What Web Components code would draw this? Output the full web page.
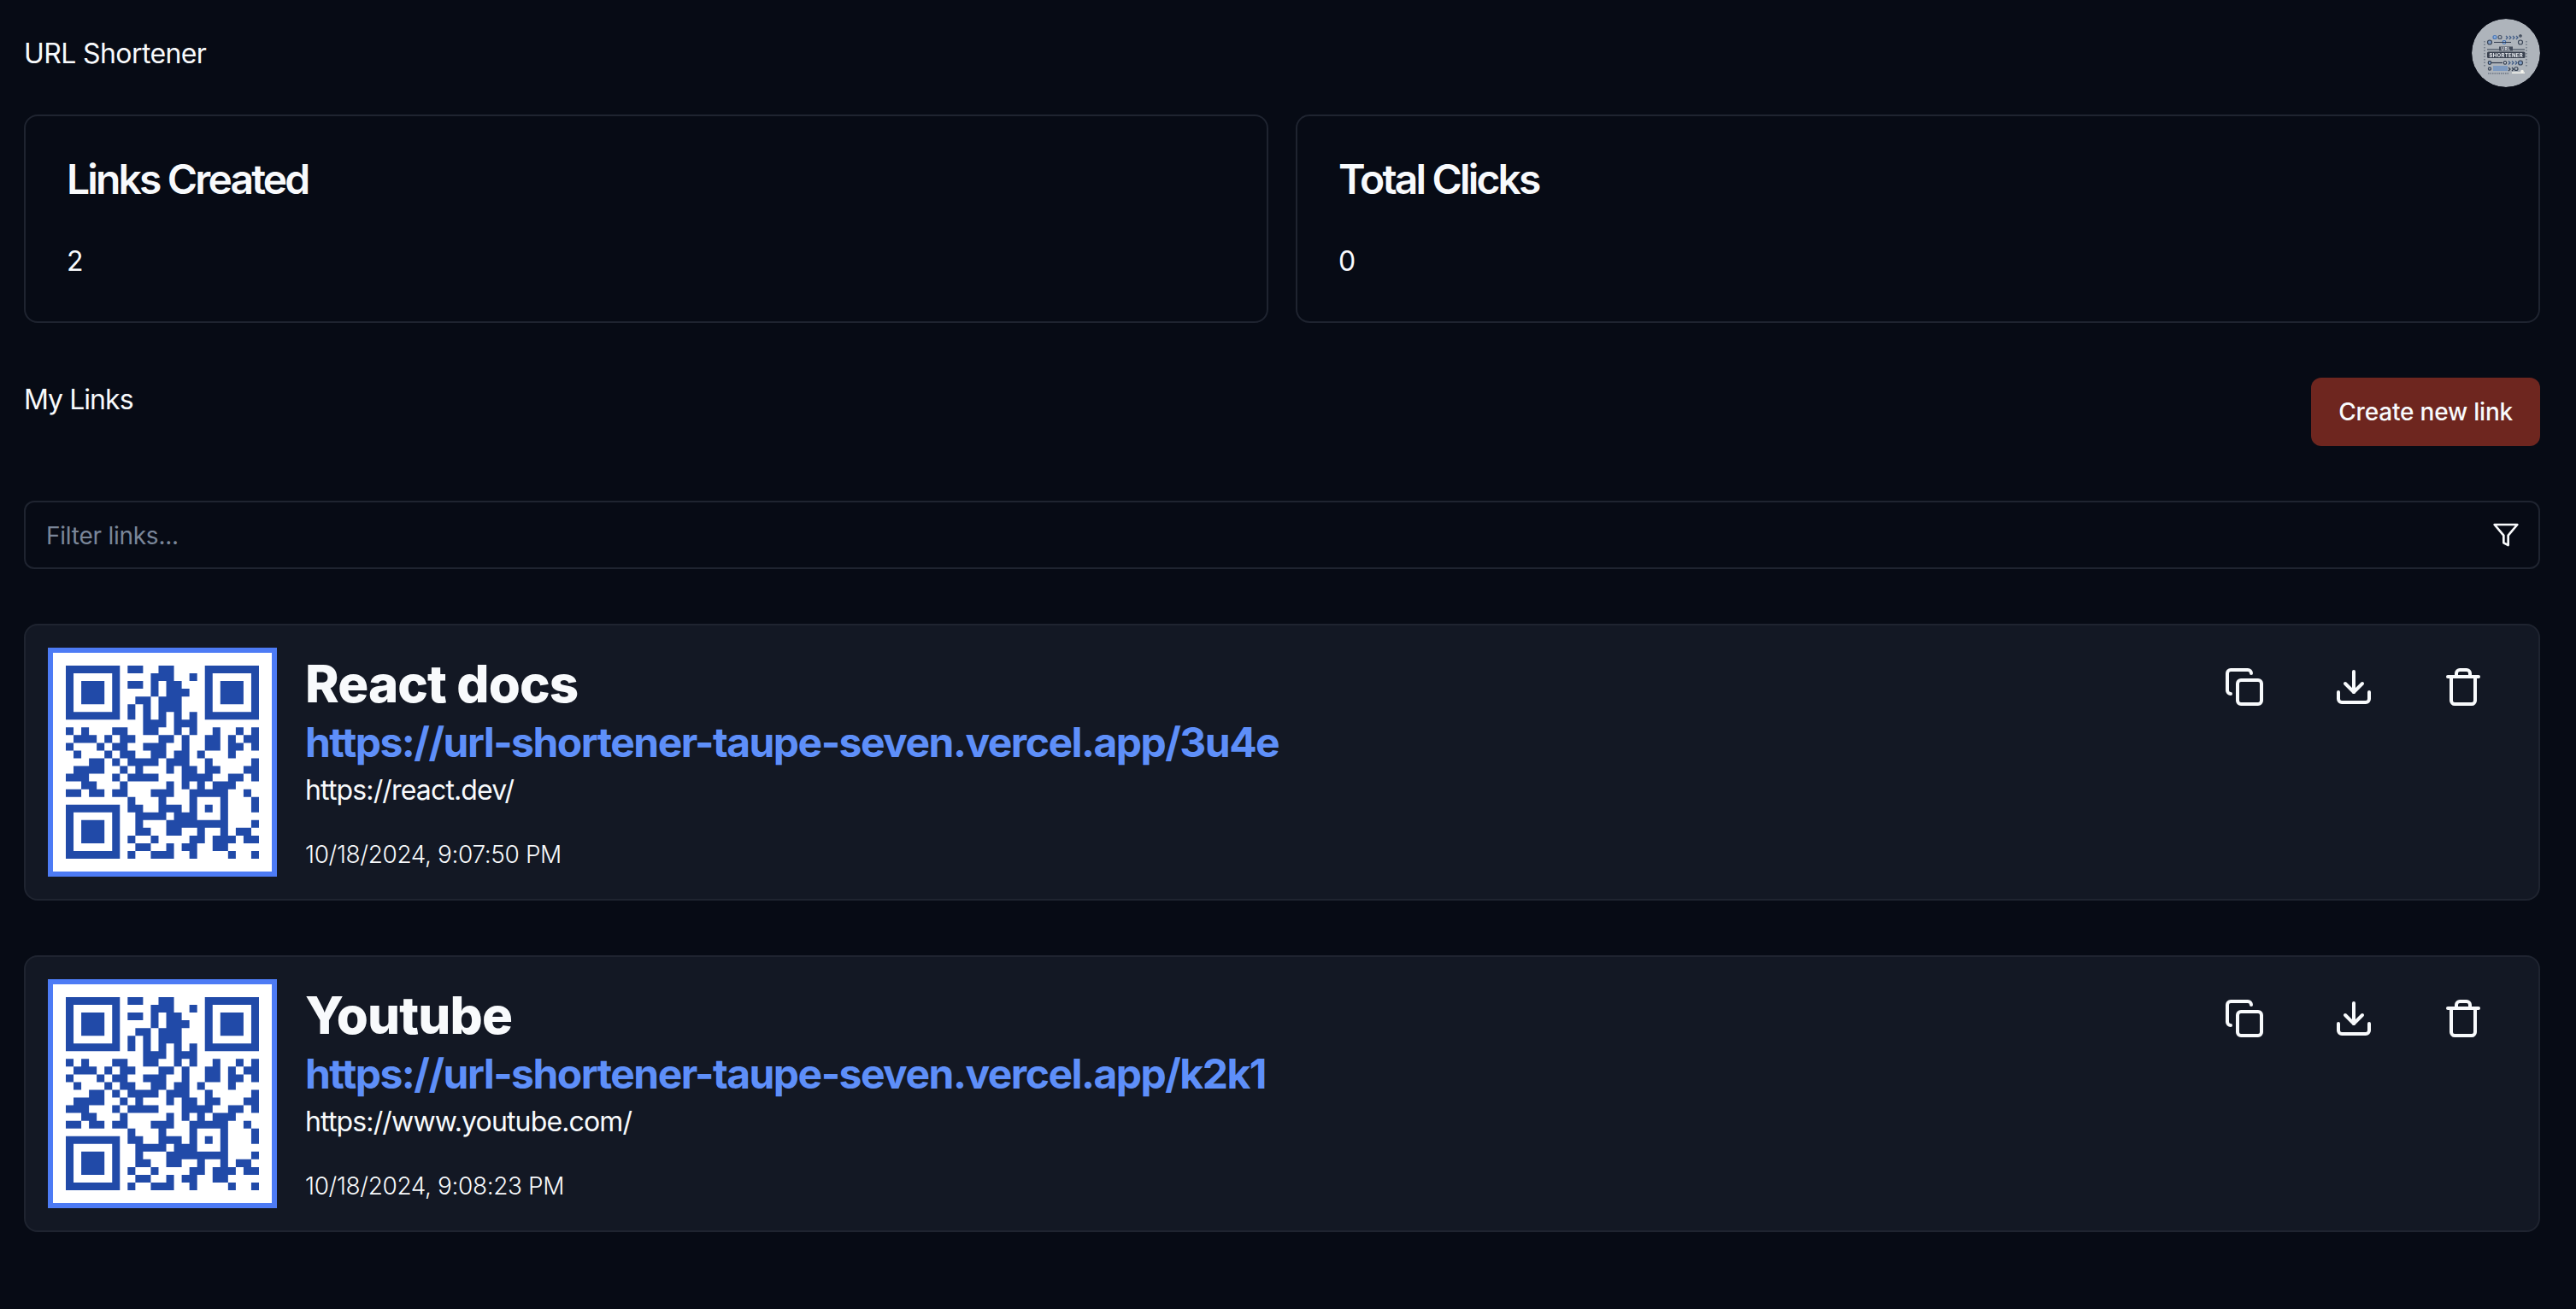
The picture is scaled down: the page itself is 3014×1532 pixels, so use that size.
<!DOCTYPE html>
<html lang="en"><head><meta charset="utf-8"><title>URL Shortener</title>
<style>
html,body{margin:0;background:#070b15}
body{font-family:Inter,"Noto Sans",sans-serif;color:#f8fafc;font-size:32px;line-height:48px;min-height:1532px;box-sizing:border-box}
url-app{display:block}
</style></head><body>
<url-app></url-app>
<template id="t-app"><style>
:host{display:block;padding:22px 42px 0 28px}
.stats{display:grid;grid-template-columns:1fr 1fr;gap:32px;margin-top:32px}
.list{display:flex;flex-direction:column;gap:64px;margin-top:64px}
</style>
<app-header></app-header>
<div class="stats"><stat-card label="Links Created" value="2"></stat-card><stat-card label="Total Clicks" value="0"></stat-card></div>
<links-toolbar></links-toolbar>
<filter-box></filter-box>
<div class="list">
<link-card name="React docs" short="https://url-shortener-taupe-seven.vercel.app/3u4e" long="https://react.dev/" date="10/18/2024, 9:07:50 PM"></link-card>
<link-card name="Youtube" short="https://url-shortener-taupe-seven.vercel.app/k2k1" long="https://www.youtube.com/" date="10/18/2024, 9:08:23 PM"></link-card>
</div></template>

<template id="t-header"><style>
:host{display:flex;justify-content:space-between;align-items:center;height:80px}
span{letter-spacing:-.6px;padding-top:2px}
</style><span>URL Shortener</span><logo-avatar></logo-avatar></template>

<template id="t-avatar"><style>
:host{display:block;width:80px;height:80px;border-radius:50%;overflow:hidden}
svg{display:block;filter:blur(.35px)}
text{font-family:Inter,sans-serif;font-weight:700}
</style><svg width="80" height="80" viewBox="0 0 80 80">
<circle cx="40" cy="40" r="40" fill="#aeb4bb"/>
<g fill="none" stroke-width="1.2">
<circle cx="27" cy="21.5" r="2" stroke="#4a78b8" fill="#8fb0dc"/><circle cx="33" cy="21.5" r="2" stroke="#4a5568"/>
<circle cx="21" cy="27.5" r="2.5" stroke="#3a4557" fill="#7f9cc4"/><circle cx="57" cy="27.5" r="2.5" stroke="#3a4557"/>
<circle cx="38" cy="27.5" r="1.8" stroke="#3f6fb3" fill="#dfe7f2"/><path d="M26 27.5h20M18 36h44" stroke="#2f3a4c"/>
<path d="M40 20l2 2-2 2M44 20l2 2-2 2M48 20l2 2-2 2M52 20l2 2-2 2" stroke="#3f5b86"/>
<circle cx="57" cy="20" r="1.2" stroke="#2f3a4c"/>
<path d="M19 51.500h17" stroke="#2f3a4c"/><circle cx="21" cy="51.500" r="1.800" stroke="#2f3a4c" fill="#8fb0dc"/><circle cx="39" cy="51.500" r="1.600" stroke="#2f3a4c" fill="#f2f5f9"/>
<path d="M43 49.500l2 2-2 2M47 49.500l2 2-2 2M51 49.500l2 2-2 2" stroke="#3f5b86"/><circle cx="57" cy="51.500" r="2.500" stroke="#3a4557" fill="#7f9cc4"/>
<path d="M25 56h17M25 58h17M25 60h17" stroke="#4f80c6"/><path d="M43 57l2 2-2 2M47 57l2 2-2 2" stroke="#2f3a4c"/><circle cx="52" cy="58.500" r="2" stroke="#3a4557"/><circle cx="21" cy="58.500" r="1.600" stroke="#3a4557"/>
</g>
<path d="M19 64h25" stroke="#4a5568" stroke-width="1" stroke-dasharray="1.500 1"/>
<rect x="47" y="62.500" width="15" height="1.500" fill="#f4f4ee"/><circle cx="59" cy="61.500" r="1.800" fill="#f4f4ee"/>
<path d="M15 26v30M64 26v30" stroke="#5a6575" stroke-width="1.200" stroke-dasharray="1.500 2"/>
<rect x="32" y="32.500" width="16" height="5" fill="#444c5b"/><text x="40" y="37" font-size="5" text-anchor="middle" fill="#e6e9ee" letter-spacing=".6">URL</text>
<rect x="18" y="38.500" width="44.500" height="7.500" rx="1.500" fill="#39414f"/><text x="40.200" y="44.500" font-size="6" text-anchor="middle" fill="#eef1f5" letter-spacing=".3">SHORTENER</text>
</svg></template>

<template id="t-stat"><style>
:host{display:block;box-sizing:border-box;height:244px;border:2px solid #1f2430;border-radius:16px;padding:50px 48px 46px}
h3{margin:0;font-size:48px;line-height:48px;font-weight:600;letter-spacing:-2.85px}
p{margin:48px 0 0;font-size:32px;line-height:48px}
</style><h3></h3><p></p></template>

<template id="t-toolbar"><style>
:host{display:flex;justify-content:space-between;align-items:flex-start;margin-top:64px}
span{letter-spacing:-.96px;padding-top:2px}
button{box-sizing:border-box;height:80px;padding:0 32px;border:0;border-radius:12px;background:#6e261f;color:#f8fafc;font:500 28px/40px Inter,sans-serif;letter-spacing:-.2px}
</style><span>My Links</span><button>Create new link</button></template>

<template id="t-filter"><style>
:host{display:block;position:relative;margin-top:64px}
input{display:block;box-sizing:border-box;width:100%;height:80px;border:2px solid #1f2430;border-radius:12px;background:transparent;padding:2px 24px 0;color:#f8fafc;font:28px/40px Inter,sans-serif;letter-spacing:-.25px;outline:0}
input::placeholder{color:#7a8699;opacity:1}
svg{position:absolute;right:24px;top:24px}
</style><input placeholder="Filter links..."><svg width="32" height="32" viewBox="0 0 24 24" fill="none" stroke="#f8fafc" stroke-width="2" stroke-linecap="round" stroke-linejoin="round"><polygon points="22 3 2 3 10 12.460 10 19 14 21 14 12.460 22 3"/></svg></template>

<template id="t-card"><style>
:host{display:flex;box-sizing:border-box;height:324px;gap:33px;background:#131824;border:2px solid #1f2430;border-radius:16px;padding:26px}
.body{flex:1;display:flex;flex-direction:column;padding-top:5px;padding-bottom:6px;min-width:0}
.name{font-size:60px;line-height:74px;font-weight:800;letter-spacing:-.9px}
.short{font-size:48px;line-height:64px;font-weight:700;color:#5e8ff9;letter-spacing:-1.53px}
.long{font-size:32px;line-height:48px;letter-spacing:-.85px}
.date{margin-top:auto;font-size:28px;line-height:40px;font-weight:300;letter-spacing:-.38px}
.actions{display:flex;gap:16px;margin:6px 6px 0 0;align-items:flex-start}
</style><qr-image></qr-image>
<div class="body"><span class="name"></span><span class="short"></span><span class="long"></span><span class="date"></span></div>
<div class="actions"><icon-button icon="copy"></icon-button><icon-button icon="download"></icon-button><icon-button icon="trash"></icon-button></div></template>

<script>
const mount=(el,id)=>{const r=el.attachShadow({mode:'open'});r.appendChild(document.getElementById(id).content.cloneNode(true));return r};
const simple=(tag,id)=>customElements.define(tag,class extends HTMLElement{constructor(){super();mount(this,id)}});
simple('url-app','t-app');simple('app-header','t-header');simple('logo-avatar','t-avatar');simple('links-toolbar','t-toolbar');simple('filter-box','t-filter');
customElements.define('stat-card',class extends HTMLElement{connectedCallback(){if(this.shadowRoot)return;const r=mount(this,'t-stat');r.querySelector('h3').textContent=this.getAttribute('label');r.querySelector('p').textContent=this.getAttribute('value')}});
customElements.define('link-card',class extends HTMLElement{connectedCallback(){if(this.shadowRoot)return;const r=mount(this,'t-card');for(const[c,a]of[['name','name'],['short','short'],['long','long'],['date','date']])r.querySelector('.'+c).textContent=this.getAttribute(a)}});
const ICONS={
copy:'<rect x="8" y="8" width="14" height="14" rx="2" ry="2"/><path d="M4 16c-1.100 0-2-.9-2-2V4c0-1.100.9-2 2-2h10c1.100 0 2 .9 2 2"/>',
download:'<path d="M21 15v4a2 2 0 0 1-2 2H5a2 2 0 0 1-2-2v-4"/><polyline points="7 10 12 15 17 10"/><line x1="12" y1="15" x2="12" y2="3"/>',
trash:'<path d="M3 6h18"/><path d="M19 6v14c0 1-1 2-2 2H7c-1 0-2-1-2-2V6"/><path d="M8 6V4c0-1 1-2 2-2h4c1 0 2 1 2 2v2"/>'};
customElements.define('icon-button',class extends HTMLElement{connectedCallback(){if(this.shadowRoot)return;this.attachShadow({mode:'open'}).innerHTML='<style>:host{display:flex;align-items:center;justify-content:center;width:112px;height:80px;border-radius:12px}svg{display:block}</style><svg width="48" height="48" viewBox="0 0 24 24" fill="none" stroke="#f8fafc" stroke-width="2" stroke-linecap="round" stroke-linejoin="round">'+ICONS[this.getAttribute('icon')]+'</svg>'}});
const QR=["8-9 12-13","11-13 16","8-9 11 13-14","11 13-15","9-10 12-14","8 10 12-14","8 10 12 14 16","10-12 14-16","0 2 6-7 10-11 14 16 19 22 24","1-3 5 7-8 12-13 15 18-19 21 23-24","0 4 6-7 10-12 15 18-19 21-22 24","1 5 7-8 11-12 14-15 17 21","3-4 6 8-11 13-15 18 24","1-4 7 9 13 15-16 18-19 23-24","0-2 6 8-11 15-18 21-22 24","2-3 7 13 15 17 19-21","0-1 3-4 6-7 11-13 16-20 23","8 12 16 20 24","8-9 12-14 16 18 20 24","9-12 14-16 20","9 13-20 24","9-10 13-14 17 20 22-23","8 11 16-17 19-21 23-24","9-10 13 15-16 19-20","8 11-13 16 21 24"];
customElements.define('qr-image',class extends HTMLElement{connectedCallback(){if(this.shadowRoot)return;let d='';
QR.forEach((row,y)=>row.split(' ').forEach(s=>{const[a,b=a]=s.split('-').map(Number);d+=`M${a} ${y}H${+b+1}V${y+1}H${a}Z`}));
for(const[x,y]of[[0,0],[18,0],[0,18]])d+=`M${x} ${y}h7v7h-7ZM${x+1} ${y+1}v5h5v-5ZM${x+2} ${y+2}h3v3h-3Z`;
this.attachShadow({mode:'open'}).innerHTML='<style>:host{display:block;flex:none;box-sizing:border-box;width:268px;height:268px;border:6px solid #4d7bf5;background:#fff;padding:15px}svg{display:block}</style><svg width="226" height="226" viewBox="0 0 25 25"><path fill="#214aa8" fill-rule="evenodd" d="'+d+'"/></svg>'}});
</script>
</body></html>
